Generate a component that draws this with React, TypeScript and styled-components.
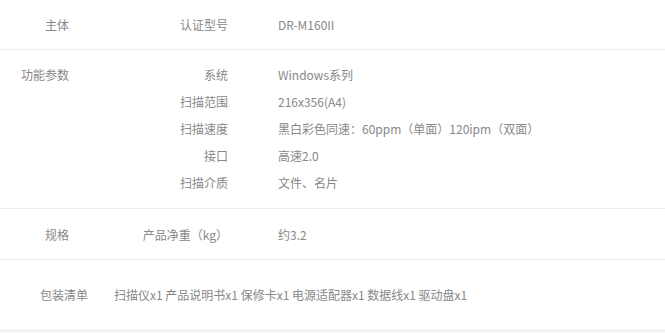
import React from "react";
import styled, {createGlobalStyle} from "styled-components";

const GlobalStyle = createGlobalStyle`
  body {
    margin: 0;
    background: #f7f7f7;
    font-family: "Noto Sans CJK SC", "Noto Sans", sans-serif;
    font-size: 12px;
    color: #888;
  }
`;

const Table = styled.div`
  background: #fff;
  width: 665px;
`;

const Section = styled.div<{ $pad?: string }>`
  display: flex;
  align-items: flex-start;
  padding: ${p => p.$pad || "11px 0 12px"};
  border-bottom: 1px solid #ececec;
  line-height: 27px;
`;

const Label = styled.div<{ $width: number }>`
  width: ${p => p.$width}px;
  flex-shrink: 0;
  text-align: right;
  white-space: nowrap;
`;

const Params = styled.div`
  display: flex;
  flex-direction: column;
`;

const ParamRow = styled.div`
  display: flex;
`;

const Key = styled.div`
  width: 159px;
  text-align: right;
  white-space: nowrap;
`;

const Value = styled.div`
  padding-left: 50px;
  white-space: nowrap;
`;

const Inline = styled.div`
  padding-left: 26px;
  white-space: nowrap;
`;

type Param = [string, string];
type Group = { label: string; params: Param[]; pad?: string };

const groups: Group[] = [
  {label: "主体", params: [["认证型号", "DR-M160II"]], pad: "11px 0 11px"},
  {
    label: "功能参数",
    params: [
      ["系统", "Windows系列"],
      ["扫描范围", "216x356(A4)"],
      ["扫描速度", "黑白彩色同速：60ppm（单面）120ipm（双面）"],
      ["接口", "高速2.0"],
      ["扫描介质", "文件、名片"],
    ],
  },
  {label: "规格", params: [["产品净重（kg）", "约3.2"]], pad: "12px 0 11px"},
];

const packing = ["扫描仪x1", "产品说明书x1", "保修卡x1", "电源适配器x1", "数据线x1", "驱动盘x1"];

export default function App() {
  return (
    <>
      <GlobalStyle/>
      <Table>
        {groups.map(g => (
          <Section key={g.label} $pad={g.pad}>
            <Label $width={69}>{g.label}</Label>
            <Params>
              {g.params.map(([k, v]) => (
                <ParamRow key={k}>
                  <Key>{k}</Key>
                  <Value>{v}</Value>
                </ParamRow>
              ))}
            </Params>
          </Section>
        ))}
        <Section $pad="21px 0 22px">
          <Label $width={88}>包装清单</Label>
          <Inline>{packing.join(" ")}</Inline>
        </Section>
      </Table>
    </>
  );
}
